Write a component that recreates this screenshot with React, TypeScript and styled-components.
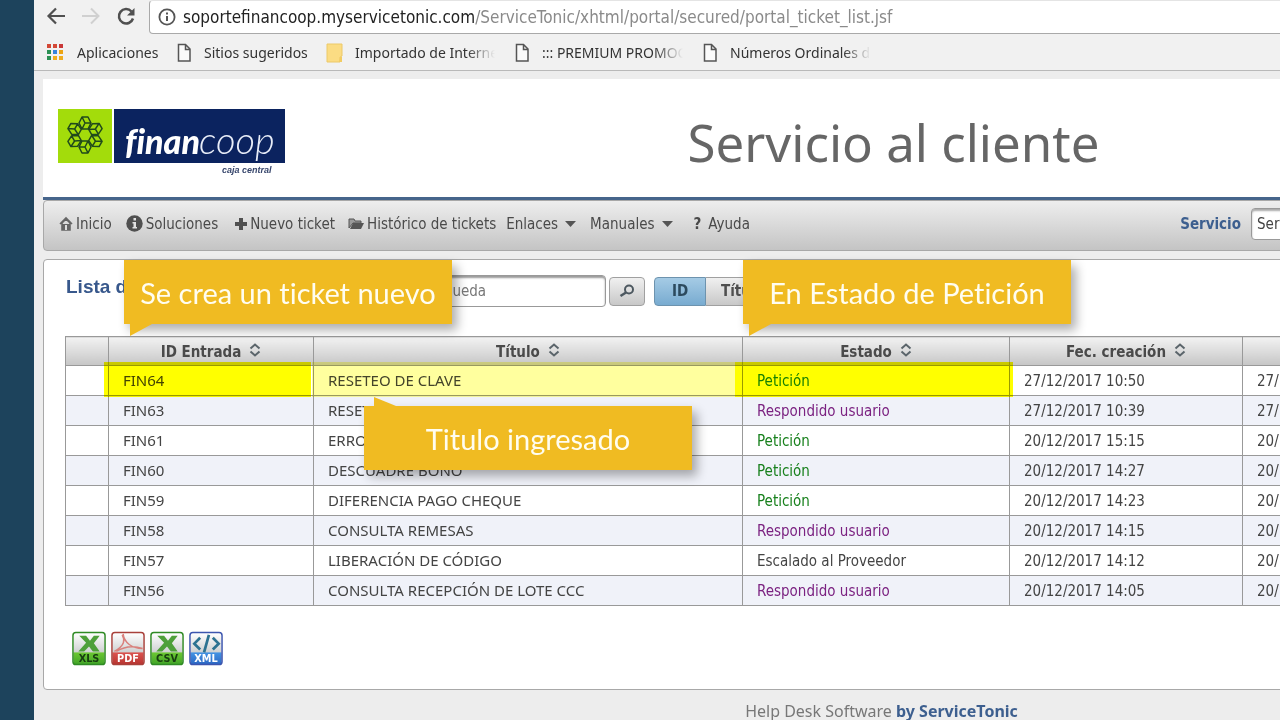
import React from "react";
import styled, { createGlobalStyle, css } from "styled-components";

const GlobalStyle = createGlobalStyle`
  *, *::before, *::after { box-sizing: border-box; }
  body { margin: 0; background: #ededed; overflow: hidden; }
  body, button, input, select { font-family: "DejaVu Sans Condensed", "Noto Sans", sans-serif; }
`;

const Screen = styled.div`
  min-height: 100vh;
  border-left: 34px solid #1d435c;
  background: #ededed;
  overflow: hidden;
  color: #444;
  font-size: 15px;
  line-height: 20px;
`;

/* Browser chrome */
const Chrome = styled.header`
  background: #f1f1f1;
  border-bottom: 1px solid #b9b9b9;
`;

const NavRow = styled.div`
  display: flex;
  align-items: center;
  height: 34px;
  padding-left: 12px;
`;

const NavButton = styled.button`
  display: block;
  width: 20px;
  height: 20px;
  margin-right: 15px;
  padding: 0;
  border: 0;
  background: none;
  svg { display: block; }
`;

const AddressBar = styled.div`
  display: flex;
  flex: 1;
  align-items: center;
  gap: 7px;
  height: 34px;
  margin-right: -4px;
  margin-left: -2px;
  padding-left: 8px;
  border: 1px solid #a9a9a9;
  border-top-color: #e4e4e4;
  border-radius: 4px;
  background: #fff;
`;

const Url = styled.span`
  color: #8a8a8a;
  font-size: 17px;
  white-space: nowrap;
  b { color: #222; font-weight: 400; }
`;

const Bookmarks = styled.nav`
  display: flex;
  align-items: center;
  height: 36px;
  padding: 1px 0 0 13px;
`;

const Bookmark = styled.a<{ $width: number; $fade?: boolean }>`
  display: flex;
  align-items: center;
  gap: 12px;
  width: ${(p) => p.$width}px;
  color: #333;
  font-family: "Noto Sans", "Open Sans", sans-serif;
  font-size: 14px;
  text-decoration: none;
  white-space: nowrap;
  svg { flex: none; }
  span {
    ${(p) => p.$fade && css`
      overflow: hidden;
      margin-right: 20px;
      mask-image: linear-gradient(to left, transparent, #000 28px);
    `}
  }
`;

/* The portal is wider than the window and runs past its right edge */
const Portal = styled.main`
  width: calc(100% + 464px);
  padding: 8px 0 0 9px;
`;

const Banner = styled.div`
  display: grid;
  grid-template-columns: 1fr auto 1fr;
  align-items: center;
  height: 121px;
  padding: 10px 0 0 15px;
  border-bottom: 3px solid #46658b;
  background: #fff;
`;

const Title = styled.h1`
  margin: 0 15px 2px 0;
  color: #666;
  font-family: "Noto Sans", "Open Sans", sans-serif;
  font-size: 51px;
  font-weight: 400;
  line-height: 64px;
`;

const MenuBar = styled.nav`
  display: flex;
  align-items: center;
  height: 51px;
  padding: 0 0 4px 15px;
  border: 1px solid #a8a8a8;
  border-radius: 4px;
  background: linear-gradient(#eee, #c4c4c4);
`;

const MenuLink = styled.a<{ $gap: number; $inner?: number }>`
  display: flex;
  align-items: center;
  gap: ${(p) => p.$inner ?? 3}px;
  margin-right: ${(p) => p.$gap}px;
  color: #4a4a4a;
  font-size: 15px;
  text-decoration: none;
  white-space: nowrap;
`;

const ServiceField = styled.label`
  display: flex;
  align-items: center;
  gap: 10px;
  margin-left: auto;
  color: #3d5f8f;
  font-size: 15px;
  font-weight: 700;
`;

const ServiceSelect = styled.select`
  appearance: none;
  width: 492px;
  height: 32px;
  padding: 0 5px;
  border: 1px solid #999;
  border-radius: 4px;
  background: #fff;
  box-shadow: inset 0 2px 2px #aaa;
  color: #444;
  font-size: 15px;
`;

const Panel = styled.section`
  position: relative;
  margin-top: 8px;
  padding: 15px 22px 23px 21px;
  border: 1px solid #a8a8a8;
  border-radius: 4px;
  background: #fff;
`;

const SearchRow = styled.form`
  display: flex;
  align-items: center;
  height: 32px;
  margin-bottom: 29px;
  padding-left: 1px;
`;

const Heading = styled.h2`
  width: 346px;
  margin: 0 0 8px;
  color: #38588c;
  font-family: "Liberation Sans", Arial, sans-serif;
  font-size: 19px;
  font-weight: 700;
  line-height: 24px;
`;

const SearchInput = styled.input`
  width: 194px;
  height: 32px;
  margin-right: 3px;
  padding: 0 6px;
  border: 1px solid #999;
  border-radius: 4px;
  box-shadow: inset 0 2px 2px #999;
  font-size: 15px;
  &::placeholder { color: #777; opacity: 1; }
`;

const buttonFace = css`
  height: 29px;
  padding: 0;
  border: 1px solid #a0a0a0;
  background: linear-gradient(#f0f0f0, #c8c8c8);
  color: #4f4f4f;
  font-size: 15px;
  font-weight: 700;
`;

const SearchButton = styled.button`
  ${buttonFace}
  display: grid;
  place-items: center;
  width: 36px;
  margin-right: 9px;
  border-radius: 4px;
`;

const FilterButton = styled.button<{ $active?: boolean }>`
  ${buttonFace}
  width: ${(p) => (p.$active ? 52 : 84)}px;
  ${(p) => p.$active
    ? css`
      border-color: #6d93ae;
      border-radius: 4px 0 0 4px;
      background: linear-gradient(#a5cbe5, #78abd0);
      color: #2c4a5e;
    `
    : css`
      padding-left: 15px;
      border-left: 0;
      border-radius: 0 4px 4px 0;
      text-align: left;
    `}
`;

const TicketTable = styled.table`
  width: 100%;
  border-collapse: collapse;
  table-layout: fixed;
`;

const HeadCell = styled.th`
  height: 29px;
  padding: 1px 0 0;
  border: 1px solid #999;
  background: linear-gradient(#f2f2f2, #c6c6c6);
  color: #4a4a4a;
  font-size: 15px;
  font-weight: 700;
  white-space: nowrap;
  svg { margin-left: 8px; }
`;

const Row = styled.tr`
  background: #fff;
  &:nth-child(even) { background: #f0f2f9; }
`;

const Cell = styled.td<{ $color?: string }>`
  position: relative;
  height: 30px;
  padding: 0 14px;
  border: 1px solid #999;
  color: ${(p) => p.$color ?? "#444"};
  font-size: 15px;
  white-space: nowrap;
`;

const NameCell = styled(Cell)`
  padding-bottom: 2px;
  font-family: "Noto Sans", "Open Sans", sans-serif;
`;

/* Marker strokes laid over the newest ticket */
const Marker = styled.span<{ $color: string; $left: number; $right: number }>`
  position: absolute;
  z-index: 1;
  top: -4px;
  bottom: -2px;
  left: ${(p) => p.$left}px;
  right: ${(p) => p.$right}px;
  background: ${(p) => p.$color};
  mix-blend-mode: multiply;
`;

const Exports = styled.div`
  display: flex;
  gap: 3px;
  margin-top: 25px;
  padding-left: 6px;
`;

const ExportButton = styled.button`
  width: 36px;
  height: 35px;
  padding: 0;
  border: 0;
  background: none;
  svg { display: block; }
`;

const Callout = styled.div<{ $left: number; $top: number; $up?: boolean }>`
  position: absolute;
  z-index: 2;
  left: ${(p) => p.$left}px;
  top: ${(p) => p.$top}px;
  width: 328px;
  height: 64px;
  background: #f0bb22;
  box-shadow: 5px 6px 10px rgba(0, 0, 0, 0.32);
  color: #fffdf0;
  font-family: Lato, "Noto Sans", sans-serif;
  font-size: 29px;
  font-variant-ligatures: none;
  line-height: 66px;
  text-align: center;
  white-space: nowrap;
  &::after {
    content: "";
    position: absolute;
    width: 22px;
    height: 12px;
    background: #f0bb22;
    ${(p) =>
      p.$up
        ? css`left: 10px; bottom: 100%; height: 9px; clip-path: polygon(0 0, 100% 100%, 0 100%);`
        : css`left: 6px; top: 100%; clip-path: polygon(0 0, 100% 0, 0 100%);`}
  }
`;

const Footer = styled.footer`
  padding: 11px 24px 0 0;
  color: #777;
  font-family: "Noto Sans", "Open Sans", sans-serif;
  font-size: 16px;
  text-align: center;
  a { color: #3d5f8f; font-weight: 700; text-decoration: none; }
`;

const PageIcon = () => (
  <svg width="15" height="20" viewBox="0 0 15 20" fill="#fafafa" stroke="#555" strokeWidth="1.5">
    <path d="M1.500 1.500h7l4.500 4.500v12h-11.500z M8.500 1.500v5h4.500" />
  </svg>
);

const AppsIcon = () => {
  const colors = ["#d34836", "#d34836", "#c93838", "#2c9154", "#3583dd", "#eca413", "#2c9154", "#efad20", "#efad20"];
  return (
    <svg width="18" height="18">
      {colors.map((c, i) => (
        <rect key={i} x={(i % 3) * 6} y={Math.floor(i / 3) * 6} width="4" height="4" fill={c} />
      ))}
    </svg>
  );
};

const SortIcon = () => (
  <svg width="12" height="14" viewBox="0 0 12 14" fill="none" stroke="#5b656b" strokeWidth="2">
    <path d="M1.500 5.500 6 1.500l4.500 4M1.500 8.500 6 12.500l4.500-4" />
  </svg>
);

const CaretIcon = () => (
  <svg width="14" height="8"><path d="M2 1h11l-5.500 6z" fill="#555" /></svg>
);

const Logo = () => {
  const cubes = [0, 60, 120, 180, 240, 300];
  return (
    <svg width="230" height="72" viewBox="0 0 230 72" role="img" aria-label="financoop caja central">
      <rect x="0" y="2" width="54" height="54" fill="#a3dc0b" />
      <rect x="56" y="2" width="171" height="54" fill="#0b235f" />
      <g transform="translate(27 28)" fill="none" stroke="#214a1c" strokeWidth="1.500" strokeLinejoin="round">
        {cubes.map((a) => (
          <path
            key={a}
            transform={`translate(${12 * Math.sin((a * Math.PI) / 180)} ${-12 * Math.cos((a * Math.PI) / 180)}) rotate(${a})`}
            d="M-3-6H3L6 0 3 6H-3L-6 0zM0 0-3-6M0 0H6M0 0-3 6"
          />
        ))}
      </g>
      <text x="67" y="47" fill="#fff" fontFamily="Lato" fontSize="34" fontStyle="italic" fontWeight="900" style={{ fontVariantLigatures: "none" }}>finan</text>
      <text x="141" y="47" fill="#e8edf8" fontFamily="Lato" fontSize="38" fontStyle="italic" fontWeight="300">coop</text>
      <text x="164" y="66" fill="#38476d" fontFamily="Liberation Sans" fontSize="9" fontStyle="italic" fontWeight="700">caja central</text>
    </svg>
  );
};

type ExportKind = "XLS" | "PDF" | "CSV" | "XML";
const exportColors: Record<ExportKind, [string, string, string, string]> = {
  XLS: ["#6cc832", "#43a528", "#2f8a24", "#173d10"],
  PDF: ["#dc5450", "#b93531", "#a8403a", "#ffffff"],
  CSV: ["#6cc832", "#43a528", "#2f8a24", "#173d10"],
  XML: ["#4494e4", "#2c68c4", "#3c55ae", "#ffffff"],
};

const ExportIcon = ({ kind }: { kind: ExportKind }) => {
  const [bandTop, bandEnd, edge, label] = exportColors[kind];
  return (
    <svg width="36" height="35" viewBox="0 0 36 36">
      <defs>
        <linearGradient id={`paper${kind}`} x2="0" y2="1">
          <stop offset="0" stopColor="#fff" />
          <stop offset="0.600" stopColor="#d0d2d3" />
        </linearGradient>
        <linearGradient id={`band${kind}`} x2="0" y2="1">
          <stop offset="0" stopColor={bandTop} />
          <stop offset="1" stopColor={bandEnd} />
        </linearGradient>
      </defs>
      <rect x="2" y="2" width="32" height="32" rx="2" fill={`url(#paper${kind})`} />
      <path d="M2 22h32v12h-32z" fill={`url(#band${kind})`} />
      {(kind === "XLS" || kind === "CSV") && (
        <path d="M8 5h7l4 5 4-5h6l-6 7.500 6 8.500h-7l-4-5-5 5h-6l8-9z" fill="#4ea03a" />
      )}
      {kind === "PDF" && (
        <path d="M4 21C15 15 15 9 12 4M13 3c1 9 9 15 20 15M6 21c8-5 18-6 27-3" fill="none" stroke="#d9807c" strokeWidth="1.500" />
      )}
      {kind === "XML" && (
        <path d="M12 7 6 13l6 6M25 7l6 6-6 6M21 4l-5 18" fill="none" stroke="#2c7291" strokeWidth="2.800" />
      )}
      <rect x="1.500" y="1.500" width="33" height="33" rx="3" fill="none" stroke={edge} strokeWidth="1.500" />
      <text x="18" y="32" fill={label} fontFamily="DejaVu Sans" fontSize="10" fontWeight="700" textAnchor="middle">{kind}</text>
    </svg>
  );
};

const stateColors: Record<string, string> = { "Petición": "#17801c", "Respondido usuario": "#7b2281" };

const tickets = [
  { id: "FIN64", title: "RESETEO DE CLAVE", state: "Petición", created: "27/12/2017 10:50" },
  { id: "FIN63", title: "RESETEO DE CLAVE", state: "Respondido usuario", created: "27/12/2017 10:39" },
  { id: "FIN61", title: "ERROR", state: "Petición", created: "20/12/2017 15:15" },
  { id: "FIN60", title: "DESCUADRE BONO", state: "Petición", created: "20/12/2017 14:27" },
  { id: "FIN59", title: "DIFERENCIA PAGO CHEQUE", state: "Petición", created: "20/12/2017 14:23" },
  { id: "FIN58", title: "CONSULTA REMESAS", state: "Respondido usuario", created: "20/12/2017 14:15" },
  { id: "FIN57", title: "LIBERACIÓN DE CÓDIGO", state: "Escalado al Proveedor", created: "20/12/2017 14:12" },
  { id: "FIN56", title: "CONSULTA RECEPCIÓN DE LOTE CCC", state: "Respondido usuario", created: "20/12/2017 14:05" },
];

const columns = ["ID Entrada", "Título", "Estado", "Fec. creación", "Fec. modificación"];

export default function App() {
  return (
    <Screen>
      <GlobalStyle />
      <Chrome>
        <NavRow>
          <NavButton aria-label="Atrás">
            <svg width="20" height="20" fill="none" stroke="#505050" strokeWidth="2.200"><path d="M19 9H3M10 1.500 2.500 9l7.500 7.500" /></svg>
          </NavButton>
          <NavButton aria-label="Adelante">
            <svg width="20" height="20" fill="none" stroke="#d0d0d0" strokeWidth="2"><path d="M1 9h16M10 1.500 17.500 9 10 16.500" /></svg>
          </NavButton>
          <NavButton aria-label="Recargar">
            <svg width="20" height="20"><path d="M15.500 4.500A7.200 7.200 0 1 0 17 11.500" fill="none" stroke="#505050" strokeWidth="2.500" /><path d="M18.500 1v7.500H11z" fill="#505050" /></svg>
          </NavButton>
          <AddressBar>
            <svg width="18" height="18" fill="none" stroke="#555" strokeWidth="1.800"><circle cx="9" cy="9" r="7.600" /><path d="M9 8v5M9 4.500v2" strokeWidth="2" /></svg>
            <Url><b>soportefinancoop.myservicetonic.com</b>/ServiceTonic/xhtml/portal/secured/portal_ticket_list.jsf</Url>
          </AddressBar>
        </NavRow>
        <Bookmarks>
          <Bookmark href="#" $width={130}><AppsIcon /><span>Aplicaciones</span></Bookmark>
          <Bookmark href="#" $width={149}><PageIcon /><span>Sitios sugeridos</span></Bookmark>
          <Bookmark href="#" $width={189} $fade>
            <svg width="17" height="20"><path d="M1 1h15v12l-2 1v5H1z" fill="#fbdc83" stroke="#ecc968" /><path d="M14 14h2v5h-3z" fill="#f2cc62" /></svg>
            <span>Importado de Internet Explorer</span>
          </Bookmark>
          <Bookmark href="#" $width={188} $fade><PageIcon /><span>::: PREMIUM PROMOCIONES</span></Bookmark>
          <Bookmark href="#" $width={188} $fade><PageIcon /><span>Números Ordinales del</span></Bookmark>
        </Bookmarks>
      </Chrome>
      <Portal>
        <Banner>
          <Logo />
          <Title>Servicio al cliente</Title>
        </Banner>
        <MenuBar>
          <MenuLink href="#" $gap={14}>
            <svg width="14" height="15"><path d="M1 8 7 2l6 6M3 7v7h8V7L7 3z" fill="#666" stroke="#666" strokeWidth="1.600" /><path d="M6 9h2v5H6z" fill="#ddd" /></svg>
            Inicio
          </MenuLink>
          <MenuLink href="#" $gap={16}>
            <svg width="17" height="17"><circle cx="8.500" cy="8.500" r="8.200" fill="#505050" /><path d="M7.500 3h2.500v2.500H7.500zM6.500 7H10v5h1v1.500H6.500V12h1V8.500h-1z" fill="#e2e2e2" /></svg>
            Soluciones
          </MenuLink>
          <MenuLink href="#" $gap={13}>
            <svg width="13" height="13"><path d="M5 1h4v4h4v4H9v4H5V9H1V5h4z" fill="#505050" /></svg>
            Nuevo ticket
          </MenuLink>
          <MenuLink href="#" $gap={10}>
            <svg width="16" height="12"><path d="M1 10V1h5l1 2h6v2H5z" fill="#999" stroke="#555" /><path d="M5 5h11l-3 6H2z" fill="#555" /></svg>
            Histórico de tickets
          </MenuLink>
          <MenuLink href="#" $gap={13} $inner={5}>Enlaces <CaretIcon /></MenuLink>
          <MenuLink href="#" $gap={20} $inner={5}>Manuales <CaretIcon /></MenuLink>
          <MenuLink href="#" $gap={0} $inner={7}><b>?</b> Ayuda</MenuLink>
          <ServiceField>
            Servicio
            <ServiceSelect><option>Servicio al cliente</option></ServiceSelect>
          </ServiceField>
        </MenuBar>
        <Panel>
          <SearchRow>
            <Heading>Lista de tickets</Heading>
            <SearchInput placeholder="Búsqueda" aria-label="Búsqueda" />
            <SearchButton type="button" aria-label="Buscar">
              <svg width="16" height="14" fill="none" stroke="#4d5860" strokeWidth="2"><circle cx="10" cy="5.500" r="4" /><path d="M7 8.500 1.500 12" strokeWidth="2.500" /></svg>
            </SearchButton>
            <FilterButton type="button" $active>ID</FilterButton>
            <FilterButton type="button">Título</FilterButton>
          </SearchRow>
          <TicketTable>
            <colgroup>
              <col width="43" /><col width="205" /><col width="429" /><col width="267" /><col width="233" /><col />
            </colgroup>
            <thead>
              <tr>
                <HeadCell />
                {columns.map((c) => <HeadCell key={c}>{c}<SortIcon /></HeadCell>)}
              </tr>
            </thead>
            <tbody>
              {tickets.map((t, i) => (
                <Row key={t.id}>
                  <Cell />
                  <NameCell>{t.id}{i === 0 && <Marker $color="#ffff00" $left={-5} $right={2} />}</NameCell>
                  <NameCell>{t.title}{i === 0 && <Marker $color="#ffff9e" $left={-2} $right={0} />}</NameCell>
                  <Cell $color={stateColors[t.state]}>{t.state}{i === 0 && <Marker $color="#ffff00" $left={-8} $right={-4} />}</Cell>
                  <Cell>{t.created}</Cell>
                  <Cell>{t.created}</Cell>
                </Row>
              ))}
            </tbody>
          </TicketTable>
          <Exports>
            {(["XLS", "PDF", "CSV", "XML"] as ExportKind[]).map((k) => (
              <ExportButton key={k} type="button" aria-label={`Exportar ${k}`}><ExportIcon kind={k} /></ExportButton>
            ))}
          </Exports>
          <Callout $left={80} $top={0}>Se crea un ticket nuevo</Callout>
          <Callout $left={699} $top={0}>En Estado de Petición</Callout>
          <Callout $left={320} $top={146} $up>Titulo ingresado</Callout>
        </Panel>
        <Footer>Help Desk Software <a href="#">by ServiceTonic</a></Footer>
      </Portal>
    </Screen>
  );
}
